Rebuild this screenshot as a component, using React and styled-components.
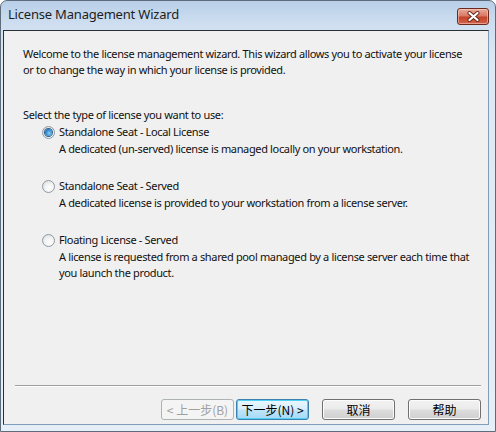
import React, { useState } from 'react';
import styled, { createGlobalStyle, css } from 'styled-components';

const GlobalStyle = createGlobalStyle`
  html, body {
    margin: 0;
    padding: 0;
    background: #ffffff;
  }
  body {
    font-family: "Noto Sans", "Open Sans", sans-serif;
  }
`;

const options = [
  {
    id: 'local',
    title: 'Standalone Seat - Local License',
    desc: ['A dedicated (un-served) license is managed locally on your workstation.'],
  },
  {
    id: 'served',
    title: 'Standalone Seat - Served',
    desc: ['A dedicated license is provided to your workstation from a license server.'],
  },
  {
    id: 'floating',
    title: 'Floating License - Served',
    desc: [
      'A license is requested from a shared pool managed by a license server each time that',
      'you launch the product.',
    ],
  },
];

const CloseIcon = () => (
  <svg width="13" height="11" viewBox="0 0 13 11">
    <path d="M2.5 2 L10.5 9 M10.5 2 L2.5 9" stroke="#6a2418" strokeWidth="4" strokeLinecap="round" />
    <path d="M2.5 2 L10.5 9 M10.5 2 L2.5 9" stroke="#ffffff" strokeWidth="2.2" strokeLinecap="round" />
  </svg>
);

const App = () => {
  const [selected, setSelected] = useState('local');

  return (
    <>
      <GlobalStyle />
      <Window>
        <TitleBar>
          <Title>License Management Wizard</Title>
          <CloseButton aria-label="Close"><CloseIcon /></CloseButton>
        </TitleBar>
        <Client>
          <Content>
            <Intro>
              <Line>Welcome to the license management wizard. This wizard allows you to activate your license</Line>
              <Line>or to change the way in which your license is provided.</Line>
            </Intro>
            <Line>Select the type of license you want to use:</Line>
            <OptionList>
              {options.map((o) => (
                <Option key={o.id} onClick={() => setSelected(o.id)}>
                  <OptionHead>
                    <Radio checked={selected === o.id} />
                    <Line>{o.title}</Line>
                  </OptionHead>
                  <Desc>
                    {o.desc.map((line) => (
                      <Line key={line}>{line}</Line>
                    ))}
                  </Desc>
                </Option>
              ))}
            </OptionList>
          </Content>
          <Footer>
            <Separator />
            <ButtonRow>
              <NavGroup>
                <Button disabled>&lt; 上一步(B)</Button>
                <Button $primary>下一步(N) &gt;</Button>
              </NavGroup>
              <Button>取消</Button>
              <Button>帮助</Button>
            </ButtonRow>
          </Footer>
        </Client>
      </Window>
    </>
  );
};

export default App;

const Window = styled.div`
  box-sizing: border-box;
  width: 496px;
  height: 432px;
  display: flex;
  flex-direction: column;
  border: 1px solid #5d6b7a;
  border-radius: 7px 7px 0 0;
  background: linear-gradient(180deg, #b8cfe8 0px, #cfdff0 24px, #dce8f4 60px, #e6eef7 100%);
`;

const TitleBar = styled.div`
  height: 28px;
  display: flex;
  align-items: center;
  justify-content: space-between;
  padding: 0 6px 0 7px;
`;

const Title = styled.div`
  font-family: "Noto Sans", sans-serif;
  font-size: 13px;
  color: #1e1e1e;
  letter-spacing: -0.2px;
  margin-top: -2px;
`;

const CloseButton = styled.button`
  box-sizing: border-box;
  width: 32px;
  height: 17px;
  margin-top: 2px;
  padding: 0;
  display: flex;
  align-items: center;
  justify-content: center;
  border: 1px solid #6b2a1c;
  border-radius: 3px;
  background: linear-gradient(180deg, #e9a899 0%, #d97a64 45%, #c4442b 55%, #d4634a 100%);
  box-shadow: inset 0 0 0 1px rgba(255, 220, 210, 0.5);
`;

const Client = styled.div`
  flex: 1;
  display: flex;
  flex-direction: column;
  margin: 1px 6px 6px 2px;
  background: #f0f0f0;
  border: 1px solid #2a2f36;
  border-right-color: #7f9db9;
  border-bottom-color: #7f9db9;
`;

const Content = styled.div`
  flex: 1;
  padding: 15px 20px 0 19px;
  font-family: "Noto Sans", sans-serif;
  font-size: 11px;
  line-height: 16px;
  color: #111111;
  letter-spacing: -0.35px;
`;

const Line = styled.div`
  white-space: nowrap;
`;

const Intro = styled.div`
  margin: 0 0 29px;
`;

const OptionList = styled.div`
  display: flex;
  flex-direction: column;
  gap: 21px;
  margin-top: 1px;
  padding-left: 19px;
`;

const Option = styled.div`
  display: flex;
  flex-direction: column;
  gap: 1px;
  cursor: default;
`;

const OptionHead = styled.div`
  display: flex;
  align-items: center;
  gap: 4px;
`;

const Radio = styled.span`
  box-sizing: border-box;
  width: 13px;
  height: 13px;
  border-radius: 50%;
  border: 1px solid #8f9aa3;
  background: radial-gradient(circle at 60% 65%, #ffffff 0%, #f4f4f4 40%, #d6d9dc 100%);
  display: flex;
  align-items: center;
  justify-content: center;

  ${(p) =>
    p.checked &&
    css`
      &::after {
        content: '';
        width: 7px;
        height: 7px;
        border-radius: 50%;
        background: radial-gradient(circle at 60% 60%, #8fd1f7 0%, #2f86c8 55%, #1b4f86 100%);
        box-shadow: 0 0 0 1px #2b5d8c;
      }
    `}
`;

const Desc = styled.div`
  padding-left: 17px;
`;

const Footer = styled.div`
  padding: 0 7px 4px 11px;
`;

const Separator = styled.div`
  height: 1px;
  background: #a0a0a0;
  border-bottom: 1px solid #ffffff;
`;

const ButtonRow = styled.div`
  display: flex;
  justify-content: flex-end;
  align-items: center;
  gap: 13px;
  padding: 12px 0 0;
`;

const NavGroup = styled.div`
  display: flex;
  gap: 2px;
`;

const Button = styled.button`
  box-sizing: border-box;
  width: 73px;
  height: 21px;
  padding: 0;
  font-family: "Noto Sans CJK SC", sans-serif;
  font-size: 12px;
  line-height: 19px;
  color: #000000;
  border: 1px solid #707070;
  border-radius: 3px;
  background: linear-gradient(180deg, #f2f2f2 0%, #ebebeb 48%, #dddddd 52%, #cfcfcf 100%);
  box-shadow: inset 0 0 0 1px #fcfcfc;

  &:disabled {
    color: #a0a0a0;
    border-color: #adb2b5;
    background: #f4f4f4;
    box-shadow: none;
  }

  ${(p) =>
    p.$primary &&
    css`
      border-color: #3c7fb1;
      background: linear-gradient(180deg, #eaf6fd 0%, #d9f0fc 48%, #bee6fd 52%, #a7d9f5 100%);
      box-shadow: inset 0 0 0 1px #4fd1f5;
    `}
`;
